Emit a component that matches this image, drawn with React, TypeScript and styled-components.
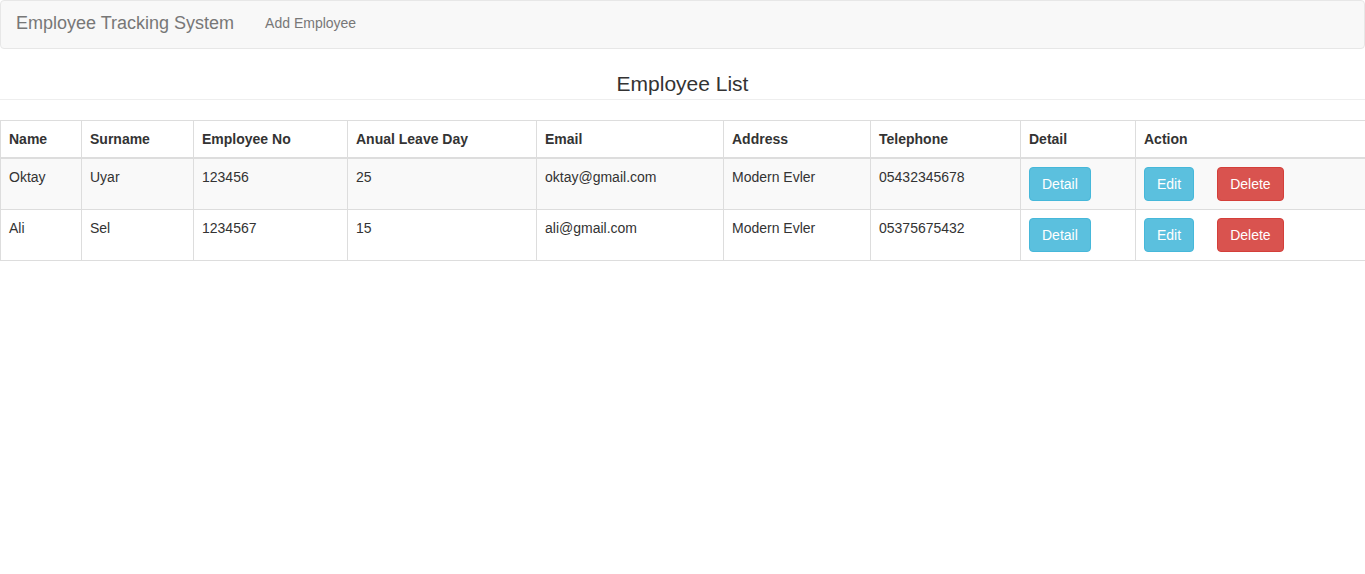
import React from "react";
import styled, { createGlobalStyle } from "styled-components";

const Global = createGlobalStyle`
  * { box-sizing: border-box; }
  body {
    margin: 0;
    font-family: "Liberation Sans", Arial, Helvetica, sans-serif;
    font-size: 14px;
    line-height: 1.42857;
    color: #333;
    background: #fff;
  }
`;

const Navbar = styled.nav`
  display: flex;
  align-items: flex-start;
  height: 49px;
  padding-top: 12px;
  background: #f8f8f8;
  border: 1px solid #e7e7e7;
  border-radius: 4px;
`;

const Brand = styled.a`
  padding: 0 15px;
  font-size: 18px;
  line-height: 20px;
  color: #777;
  text-decoration: none;
`;

const NavLink = styled.a`
  padding: 0 15px 0 16px;
  font-size: 14px;
  line-height: 20px;
  color: #777;
  text-decoration: none;
`;

const Title = styled.h3`
  margin: 23px 0 0;
  font-size: 21px;
  font-weight: 500;
  line-height: 1.1;
  text-align: center;
  color: #333;
`;

const Rule = styled.hr`
  margin: 4px 0 20px;
  border: 0;
  border-top: 1px solid #eee;
`;

const Table = styled.table`
  width: 100%;
  table-layout: fixed;
  border-collapse: collapse;
  border-spacing: 0;
  border: 1px solid #ddd;
`;

const Th = styled.th`
  padding: 8px;
  text-align: left;
  font-weight: bold;
  line-height: 20px;
  border: 1px solid #ddd;
  border-bottom-width: 2px;
  vertical-align: bottom;
`;

const Row = styled.tr<{ $striped?: boolean }>`
  background: ${(p) => (p.$striped ? "#f9f9f9" : "transparent")};
`;

const Td = styled.td`
  padding: 8px;
  line-height: 20px;
  border: 1px solid #ddd;
  vertical-align: top;
  white-space: nowrap;
`;

const Button = styled.button<{ $variant: "info" | "danger"; $gap?: number }>`
  display: inline-block;
  margin-left: ${(p) => p.$gap ?? 0}px;
  padding: 6px 12px;
  font-family: inherit;
  font-size: 14px;
  line-height: 20px;
  color: #fff;
  border-radius: 4px;
  cursor: pointer;
  background: ${(p) => (p.$variant === "info" ? "#5bc0de" : "#d9534f")};
  border: 1px solid ${(p) => (p.$variant === "info" ? "#46b8da" : "#d43f3a")};
`;

const widths = [81, 112, 154, 189, 187, 147, 150, 115, 230];
const headers = [
  "Name",
  "Surname",
  "Employee No",
  "Anual Leave Day",
  "Email",
  "Address",
  "Telephone",
  "Detail",
  "Action",
];

const employees = [
  { name: "Oktay", surname: "Uyar", no: "123456", leave: "25", email: "oktay@gmail.com", address: "Modern Evler", tel: "05432345678" },
  { name: "Ali", surname: "Sel", no: "1234567", leave: "15", email: "ali@gmail.com", address: "Modern Evler", tel: "05375675432" },
];

export default function App() {
  return (
    <>
      <Global />
      <Navbar>
        <Brand href="#">Employee Tracking System</Brand>
        <NavLink href="#">Add Employee</NavLink>
      </Navbar>
      <Title>Employee List</Title>
      <Rule />
      <Table>
        <colgroup>
          {widths.map((w, i) => (
            <col key={i} style={{ width: w }} />
          ))}
        </colgroup>
        <thead>
          <tr>
            {headers.map((h) => (
              <Th key={h}>{h}</Th>
            ))}
          </tr>
        </thead>
        <tbody>
          {employees.map((e, i) => (
            <Row key={e.no} $striped={i % 2 === 0}>
              <Td>{e.name}</Td>
              <Td>{e.surname}</Td>
              <Td>{e.no}</Td>
              <Td>{e.leave}</Td>
              <Td>{e.email}</Td>
              <Td>{e.address}</Td>
              <Td>{e.tel}</Td>
              <Td>
                <Button $variant="info">Detail</Button>
              </Td>
              <Td>
                <Button $variant="info">Edit</Button>
                <Button $variant="danger" $gap={23}>Delete</Button>
              </Td>
            </Row>
          ))}
        </tbody>
      </Table>
    </>
  );
}
